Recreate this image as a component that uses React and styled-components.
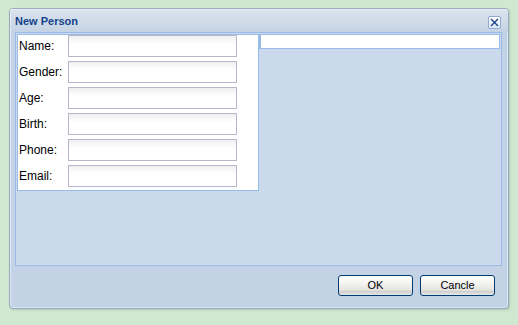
import React from "react";
import styled, { createGlobalStyle } from "styled-components";

const Global = createGlobalStyle`
  html, body { margin: 0; padding: 0; }
  body { background: #cfe8cf; width: 518px; height: 325px; overflow: hidden; }
`;

const Page = styled.div`
  padding: 8px 0 0 9px;
`;

const Window = styled.div`
  box-sizing: border-box;
  width: 500px;
  height: 301px;
  border: 1px solid #99a9bf;
  border-radius: 4px;
  background: #c3d3e5;
  box-shadow: inset 0 0 0 1px #dfe8f2, 1px 1px 2px rgba(120,140,120,0.35);
  display: flex;
  flex-direction: column;
  padding: 0 6px 0 5px;
  font-family: "Liberation Sans", Arial, sans-serif;
`;

const Header = styled.div`
  height: 23px;
  margin: 0 -6px 0 -5px;
  padding: 0 7px 0 5px;
  display: flex;
  align-items: center;
  justify-content: space-between;
  background: linear-gradient(#dbe3ed, #c4d3e4);
  border-radius: 3px 3px 0 0;
  box-shadow: inset 1px 1px 0 #e6edf5;
`;

const Title = styled.span`
  font-weight: bold;
  font-size: 11px;
  color: #15428b;
  margin-top: 1px;
`;

const CloseButton = styled.div`
  box-sizing: border-box;
  width: 13px;
  height: 13px;
  margin-top: 4px;
  border: 1px solid #8fa9d2;
  border-radius: 2px;
  background: linear-gradient(#ffffff, #dfe8f5);
  display: flex;
  align-items: center;
  justify-content: center;
`;

const Body = styled.div`
  box-sizing: border-box;
  height: 234px;
  border: 1px solid #99bbe8;
  background: #cad9ec;
  padding: 1px;
  display: flex;
  align-items: flex-start;
`;

const FormPanel = styled.div`
  box-sizing: border-box;
  width: 242px;
  background: #fff;
  border: 1px solid #99bbe8;
  padding: 0 0 3px 1px;
  display: flex;
  flex-direction: column;
  gap: 4px;
`;

const Row = styled.div`
  display: flex;
  align-items: center;
  height: 22px;
`;

const Label = styled.label`
  width: 49px;
  font-size: 12px;
  color: #000;
`;

const Input = styled.div`
  box-sizing: border-box;
  width: 169px;
  height: 22px;
  border: 1px solid #b5b8c8;
  background: linear-gradient(#eeeeee 0px, #fafafa 5px, #ffffff 9px);
`;

const SidePanel = styled.div`
  box-sizing: border-box;
  width: 242px;
  height: 15px;
  background: #fff;
  border: 1px solid #99bbe8;
  border-left-width: 2px;
`;

const Footer = styled.div`
  flex: 1;
  display: flex;
  justify-content: flex-end;
  align-items: flex-start;
  padding: 9px 7px 0 0;
  gap: 7px;
`;

const Button = styled.button`
  box-sizing: border-box;
  width: 75px;
  height: 21px;
  border: 1px solid #003c74;
  border-radius: 3px;
  background: linear-gradient(#ffffff 0%, #f3f3f1 40%, #e4e3df 75%, #cfcfcf 80%, #e6e6e6 100%);
  font-family: "Liberation Sans", Arial, sans-serif;
  font-size: 11px;
  color: #000;
  padding: 0;
  line-height: 19px;
`;

const fields = ["Name:", "Gender:", "Age:", "Birth:", "Phone:", "Email:"];

export default function App() {
  return (
    <Page>
      <Global />
      <Window>
        <Header>
          <Title>New Person</Title>
          <CloseButton>
            <svg width="9" height="9" viewBox="0 0 9 9">
              <path d="M1 1 L8 8 M8 1 L1 8" stroke="#15428b" strokeWidth="1.4" />
            </svg>
          </CloseButton>
        </Header>
        <Body>
          <FormPanel>
            {fields.map((f) => (
              <Row key={f}>
                <Label>{f}</Label>
                <Input />
              </Row>
            ))}
          </FormPanel>
          <SidePanel />
        </Body>
        <Footer>
          <Button>OK</Button>
          <Button>Cancle</Button>
        </Footer>
      </Window>
    </Page>
  );
}
